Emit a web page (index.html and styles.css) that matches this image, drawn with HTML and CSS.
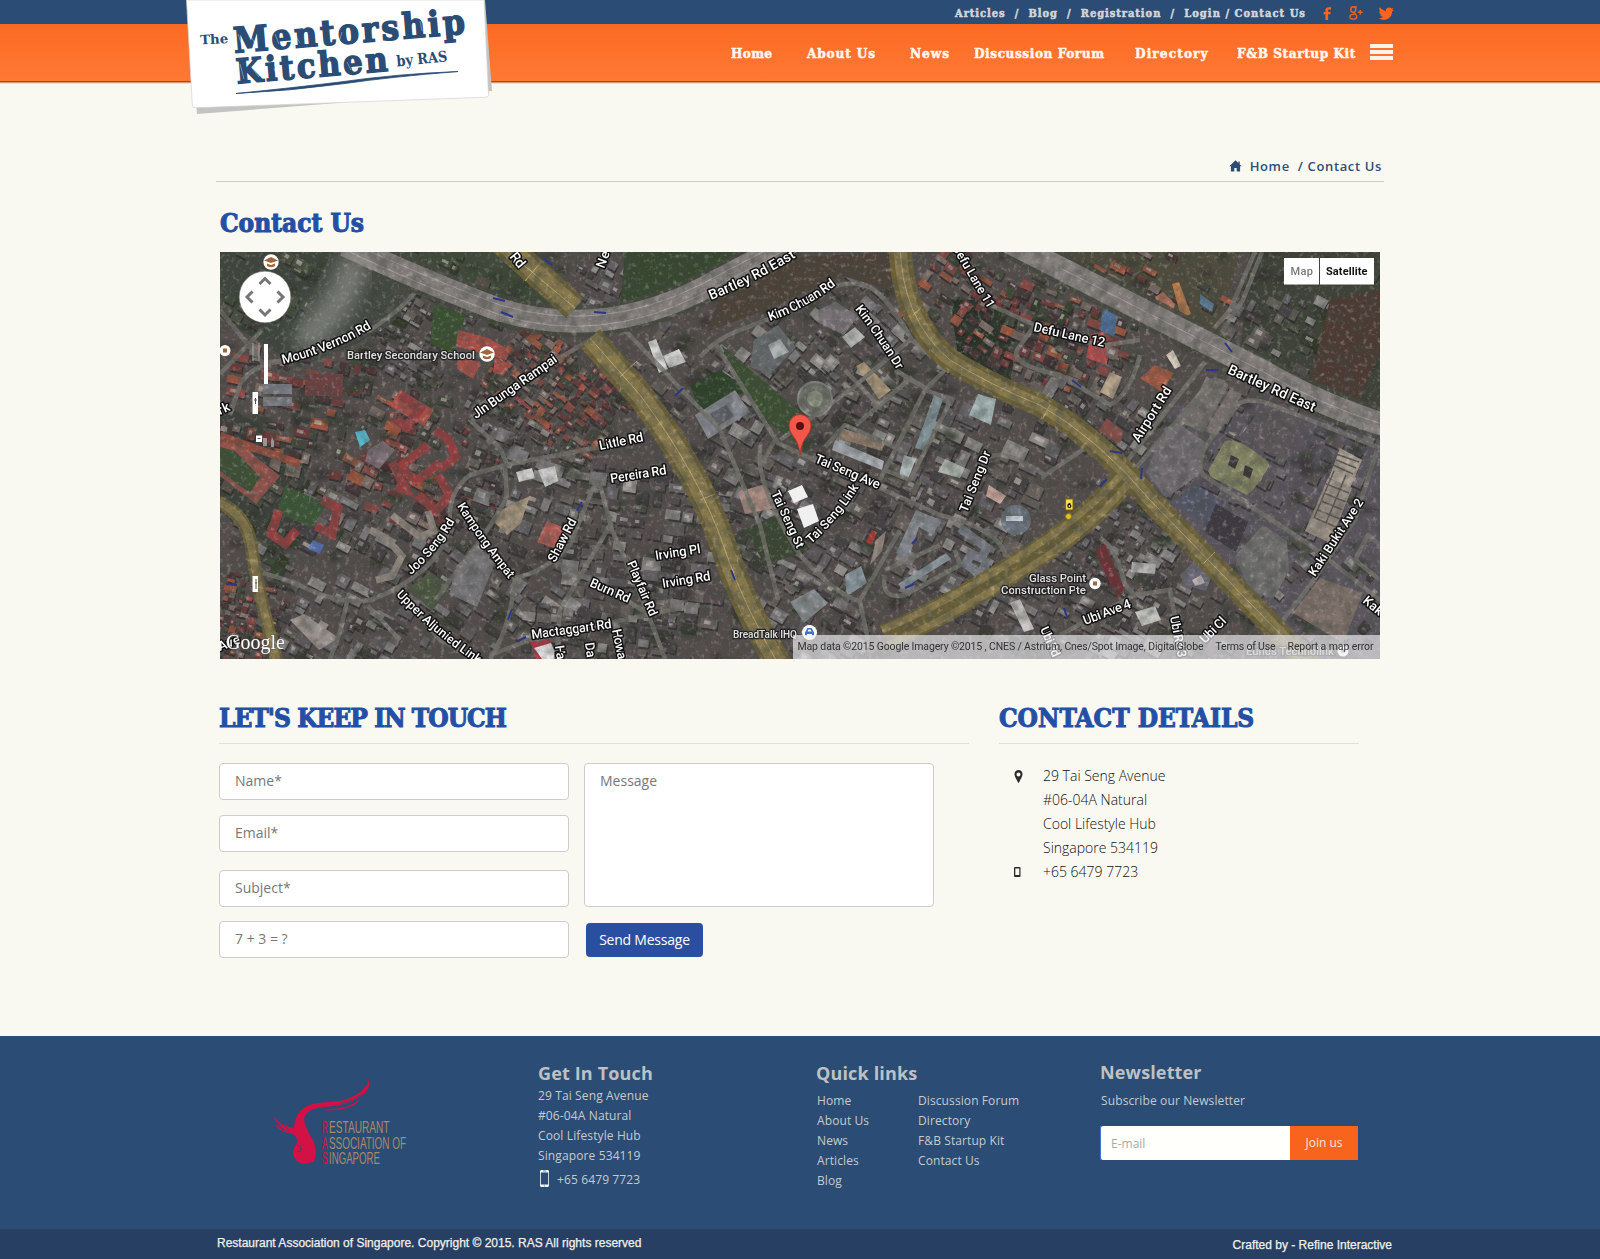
FILE: index.html
```html
<!DOCTYPE html>
<html lang="en">
<head>
<meta charset="utf-8">
<title>Contact Us - The Mentorship Kitchen by RAS</title>
<link rel="stylesheet" href="styles.css">
</head>
<body>
<header class="header">
  <div class="topbar">
    <nav class="toplinks">
      <a>Articles</a><i>/</i><a>Blog</a><i>/</i><a>Registration</a><i>/</i><a>Login / Contact Us</a>
    </nav>
    <div class="social">
      <svg width="9" height="13" viewBox="0 0 9 13"><path d="M2.4 13V7.2H.5V5h1.9V3.4C2.4 1.300 3.700.3 5.700.3H8v2.200H6.500C5.500 2.500 5.100 2.900 5.100 3.700V5h2.700L7.400 7.200H5.100V13z" fill="#f9651f"/></svg>
      <svg class="gplus" width="15" height="14" viewBox="0 0 15 14" fill="none" stroke="#e0622c" stroke-width="1.500"><ellipse cx="4.300" cy="3.500" rx="2.500" ry="2.700"/><path d="M4.500 1H8M5.500 6C3.500 7.500 7.800 7.700 7.800 10.500 7.800 14 .9 14 .9 10.700.9 8.600 3.500 8.200 5.200 8.300M11.300 4v4.600M9 6.300h4.600"/></svg>
      <svg width="16" height="13" viewBox="0 0 16 13"><path d="M15.800 3.300l-1.700 1.100C14 9.300 10.500 12.800 5.700 12.800 3.700 12.800 2 12.100.7 11c2 .1 3.300-.4 4.300-1.200-1.500-.2-2.400-.9-2.800-2.100h1.300C2 7.200 1.200 6 1.200 4.500l1.300.4C1.200 3.700.8 2 1.700.3l2.200 2L7.800 4.200C7.500 1.700 9.300.4 11 .5c1 0 1.700.4 2.300 1l2-.7-1.200 1.700z" fill="#f9651f"/></svg>
    </div>
  </div>
  <div class="mainbar">
    <nav class="mainnav">
      <a class="n1">Home</a><a class="n2">About Us</a><a class="n3">News</a><a class="n4">Discussion Forum</a><a class="n5">Directory</a><a class="n6">F&amp;B Startup Kit</a>
      <span class="burger"><b></b><b></b><b></b></span>
    </nav>
  </div>
  <svg class="logo" width="310" height="118" viewBox="185 0 310 118">
    <path d="M189 0H485L492 91 197 114z" fill="#c3c3c1"/>
    <path d="M186.500 0H484L488.500 95Q488.500 97 486 97.200L195 107.800Q192.500 107.800 192.300 105z" fill="#fff" stroke="#d2d2d2" stroke-width=".7"/>
    <g class="logotext">
      <text class="wide" transform="translate(200.500 44.500) rotate(-3)" font-size="13" textLength="28" lengthAdjust="spacingAndGlyphs">The</text>
      <g transform="translate(234.500 52.700) rotate(-4.700)"><text font-size="35" textLength="232" class="rough">Mentorship</text></g>
      <g transform="translate(237 83.500) rotate(-4.700)"><text font-size="34" textLength="152" class="rough">Kitchen</text></g>
      <text class="wide" transform="translate(397 66.500) rotate(-6)" font-size="15" textLength="51" lengthAdjust="spacingAndGlyphs">by RAS</text>
    </g>
    <path d="M236 93.500Q300 87 340 82 395 74 458 71.500 390 77 345 83.500 290 91 236 93.500z" fill="#2b4c74" stroke="#2b4c74" stroke-width=".8"/>
    <g stroke="#fff" stroke-width=".7" opacity=".55" fill="none"><path d="M238 34l5 14m6-15l8 14m18-13l4 10m15-11l6 10m18-10l4 10m20-11l-3 10m21-12l3 10m18-12l-7 9m21-24l4 22m21-14l2 10m16-12l3 15M240 64l4 15m8-11l7 9m15-9l3 9m13-12l3 10m14-8l4 7m17-22l3 20m16-10l4 8m14-9l3 8"/></g>
  </svg>
</header>

<main class="page">
  <div class="crumbs">
    <svg width="13" height="12" viewBox="0 0 13 12"><path d="M6.500.3L.3 6.300h1.600V11.600H5.300V8h2.400v3.600h3.400V6.300h1.600L10.700 4.400V1.500H9.300V3z" fill="#2b4c74"/></svg>
    <a>Home</a><span>/ Contact Us</span>
  </div>
  <h1>Contact Us</h1>

  <svg class="map" id="map" width="1160" height="407" viewBox="220 252 1160 407">
    <defs>
      <filter id="grain" x="0" y="0" width="100%" height="100%">
        <feTurbulence type="fractalNoise" baseFrequency=".09" numOctaves="5" seed="8"/>
        <feColorMatrix values="0 0 0 0 .05  0 0 0 0 .06  0 0 0 0 .05  1.900 1.200 0 0 -1.150"/>
      </filter>
      <filter id="light" x="0" y="0" width="100%" height="100%">
        <feTurbulence type="fractalNoise" baseFrequency=".22" numOctaves="3" seed="31"/>
        <feColorMatrix values="0 0 0 0 .8  0 0 0 0 .76  0 0 0 0 .74  2.200 1 0 0 -1.680"/>
      </filter>
      <filter id="mist" x="-30%" y="-30%" width="160%" height="160%"><feGaussianBlur stdDeviation="9"/></filter>
      <filter id="soft" x="-2%" y="-2%" width="104%" height="104%"><feGaussianBlur stdDeviation=".6"/></filter>
      <filter id="leaf" x="-5%" y="-5%" width="110%" height="110%"><feGaussianBlur stdDeviation="2.200"/></filter>
    </defs>
    <rect x="220" y="252" width="1160" height="407" fill="#554e4d"/>
    <g id="land">
      <path d="M220 252h150l60 40-70 50-60 25-80-50z" fill="#3f463d"/>
      <path d="M380 252h115l60 52-60-4-70-22z" fill="#404a3a"/>
      <path d="M220 400l90 60-30 110-60-60z" fill="#3e413b"/>
      <path d="M950 300h70l-10 90-50-20z" fill="#2a3328"/>
      <path d="M1040 252h200l-20 80-110-50z" fill="#504c3d"/>
      <path d="M1250 252h130v165l-100-30-40-30z" fill="#3f4338"/>
      <path d="M1170 410l50-20 160 45v224h-80l-160-190z" fill="#5d5760"/>
    </g>
    <g id="buildings" filter="url(#soft)"></g>
    <g id="trees" filter="url(#leaf)"></g>
    <g id="landmarks">
      <path d="M625 252H760l-60 38-50 20-30-5z" fill="#37482f"/>
      <path d="M1330 300l50-10v60l-20 50-50-20z" fill="#4d3b33"/>
      <path d="M745 530l40-20 25 40-45 15z" fill="#3a4632"/>
      <path d="M690 385l30-15 30 20-50 22z" fill="#2d4228"/>
      <path d="M330 255l60 10 30 25-30 35-60 30-35-25z" fill="#464b43" opacity=".8"/>
      <path d="M434 303l32 12-14 38-22-10z" fill="#39502f"/>
      <path d="M220 438l20 6 40 32-24 28-36-28z" fill="#94524b"/><path d="M220 447l15 4 25 26-10 16-30-22z" fill="#3e5134"/>
      <path d="M285 486l42 18-16 24-34-16z" fill="#3c5636"/>
      <path d="M721 345l95 80-18 20-40-30z" fill="#3b4f32"/>
      <path d="M780 258l115-6 8 42-60-18-80 35-55 20 15-45z" fill="#4d4238"/>
      <g fill="#aa4f48"><path d="M458 330l30 8 22 12-4 10-50-14zM459 355l22 8-8 16-16-10zM495 358l16 6-8 12-10-4zM400 390l34 20-10 16-34-20z"/></g>
      <g fill="none" stroke="#943f40" stroke-width="9"><path d="M435 430l14 10 7 17-16 12M392 462l14 28-10-4M428 445l-28 22 16 14 24-18M438 475l12 20-14 16-18-16M279 510l-8 24 14 10 12-14M322 500l16 8-6 26-16-8M400 395l20 14-14 18-10-8"/></g>
      <path d="M220 436l80 28" stroke="#934c3e" stroke-width="8"/>
      <path d="M305 374h38v22h-38z" fill="#6d4141"/><path d="M263 384h29v10h-29zm0 13h29v9h-29z" fill="#7c7e86"/>
      <path d="M355 432l10-2 5 10-10 7z" fill="#54c4dc"/><path d="M313 540l11 5-4 9-12-5z" fill="#5872bc"/>
      <path d="M368 450l15-9 12 9-16 19-14-8z" fill="#807078"/>
      <g fill="#d6d6d6"><path d="M648 342l8-3 12 30-9 4zM663 356l16-7 7 13-17 6zM516 472l16-4 3 10-16 4zM538 470l17-4 3 15-13 6z"/></g>
      <path d="M695 415l40-25 15 22-42 27z" fill="#85878f"/><path d="M710 414l16-9 8 11-16 10z" fill="#62636b"/>
      <path d="M754 340l24-15 18 22-26 28-20-8z" fill="#686b6e"/><path d="M768 345l12-6 9 13-15 7z" fill="#b0b4b4"/>
      <circle cx="815" cy="399" r="17" fill="#6c7068" stroke="#878b82" stroke-width="2"/><circle cx="815" cy="399" r="8" fill="#8a8d7f"/>
      <path d="M818 310l18-8 22 14-14 19-25-12z" fill="#797277"/><path d="M842 337l13-10 10 10-14 11z" fill="#b3b5b3"/>
      <path d="M856 366l8-4 27 28-12 9z" fill="#b19a7c"/>
      <path d="M842 428l43 14-3 9-44-13z" fill="#8d7969"/><path d="M835 440l49 21-2 9-50-20z" fill="#aaaeb5"/>
      <path d="M934 395l9 4-17 52-11-3z" fill="#7f8f95"/><path d="M904 455l12 4-8 20-9-3z" fill="#b0bbbb"/>
      <path d="M978 394l18 5-5 26-22-10z" fill="#a6b6b7"/><path d="M945 459l20 9-5 10-22-6z" fill="#aab2aa"/>
      <path d="M989 485l17 11-6 8-14-8z" fill="#d3aaa1"/>
      <circle cx="1016" cy="520" r="15" fill="#6c7480"/><path d="M1006 516h17v5h-17z" fill="#dce6ef"/>
      <path d="M898 584l48-31 5 6-49 30z" fill="#8b96a0"/><path d="M916 510l25 10-8 15-14-8-10 30-13-4z" fill="#85888e"/><path d="M960 528l27 20-6 10-10-4-5 10 14 10 8-14" fill="none" stroke="#777a82" stroke-width="9"/>
      <path d="M497 512l20-10 13-6-9 27-14 12-12-12z" fill="#a3927b"/><path d="M547 521l23 9-13 19-20-7z" fill="#b85d55"/>
      <path d="M457 565l20-16 18 14-18 44-28-13z" fill="#787679"/>
      <path d="M408 588l22-16 21 15-19 24z" fill="#4c5841"/>
      <path d="M370 530l16 8 16 18-10 20-16 4M392 515l28 22 14-6-6-20" fill="none" stroke="#8f867e" stroke-width="7"/>
      <path d="M290 620l14-6 35 24-20 12z" fill="#9c938f"/><path d="M530 642l20-2 8 19h-22z" fill="#ad3544"/><path d="M534 648l17-5 7 16h-16z" fill="#eee"/>
      <path d="M1155 297l8-5 12 12-4 16-10-6z" fill="#af6f5a"/><path d="M1172 284l7-2 12 32-10 3z" fill="#ba794b"/><path d="M1200 294l14 10-2 8-12-8z" fill="#587893"/>
      <path d="M1103 308l14 8-3 21-14-7z" fill="#4d6c96"/><path d="M1173 350l8 16-6 3-9-14z" fill="#dcd1c2"/><path d="M1155 365l19 8-12 19-22-14z" fill="#aa5b45"/>
      <path d="M1091 334l12-2 4 33-21-7z" fill="#b14b4d"/><path d="M1110 372l12 5-9 22-13-7z" fill="#b8a48a"/><path d="M1107 418l16 13-3 13-22-13z" fill="#8c4e49"/>
      <path d="M1206 377l20 6-23 47-19-8z" fill="#77706f"/><path d="M1230 389l12 5-26 42-11-5z" fill="#7c7272"/>
      <path d="M1165 428l12-6 28 20-5 32-34 24-20-26z" fill="#736d72"/><path d="M1193 482l30 20-12 26-36-24z" fill="#545768"/><path d="M1216 504l32 18-12 30-32-20z" fill="#3e3841"/>
      <path d="M1256 415l28-12 20 20-20 37-46-20z" fill="#5d565a"/>
      <path d="M1225 441q14-4 42 20 4 3 0 9l-14 20-6 5-36-18-3-6z" fill="#858764"/><path d="M1231 455l8 4-4 10-7-4zm14 10l8 4-3 10-7-4z" fill="#3c3438"/>
      <path d="M1263 525l24 16 2 30-16 28-24-10-14-33z" fill="#727170"/><path d="M1303 540l14 10-20 10z" fill="#4e5048"/>
      <path d="M1340 448l22 12-12 28-21-10z" fill="#b0a498"/><path d="M1328 478l24 10-22 55-25-12z" fill="#9a8f86"/><path d="M1336 454l23 8m-25-3l22 9m-25-4l22 10M1326 484l23 9m-25 0l22 9m-25-1l22 9m-25 0l22 9m-25-1l21 9m10-52l-20 48m8-52l-20 47" stroke="#5e5652" stroke-width="1.500"/>
      <path d="M1095 550l10-6 20 47-8 8z" fill="#713035"/><path d="M1132 562l24 2-1 10-24-2z" fill="#b8b7b7"/><path d="M1180 575l14-14 20 10-8 20-22-6z" fill="#6a6776"/><path d="M1192 580l9-5 4 8-10 3z" fill="#bcb1b2"/>
      <path d="M1010 603l10-4 14 30-10 3z" fill="#ccc6c5"/><path d="M1135 612l20-6 6 14-19 6z" fill="#c5c5c0"/>
      <path d="M876 540l10-9-4 20-12 14z" fill="#9e8e86"/><path d="M872 530l5 2-5 13-6-3z" fill="#a13a34"/>
      <path d="M1320 578l43 15-20 50-50-30z" fill="#80716a"/>
      <path d="M790 602l24-13 14 14-24 20z" fill="#878c90"/><path d="M845 575l16-9 6 17-20 13z" fill="#8c9aa4"/><path d="M738 492l27-8 10 24-30 6z" fill="#a78980"/>
    </g>

    <g class="road minor">
      <path d="M425 280Q405 308 370 330L285 360Q250 365 240 385L230 415M220 310L262 362 280 362M220 374L262 330"/>
      <path d="M262 573Q290 580 310 590 345 605 370 600 400 590 425 568 450 545 450 515 450 490 470 475L510 464 600 447Q640 440 655 420M507 464L500 448 472 422 480 405 590 340"/>
      <path d="M505 468L507 497Q490 530 450 580L436 600M515 578L512 600Q508 630 490 659M515 578Q545 572 570 545L592 490 600 480M555 562L610 590 650 615M600 485L612 530Q640 590 665 659"/>
      <path d="M612 522L560 610 556 659M490 655L530 640 660 612 700 605M395 586L440 640 480 659M347 602L340 632 330 659M368 606L400 640"/>
      <path d="M620 325L720 430 760 525 778 600M590 340L655 425M760 445L760 465Q765 500 800 555 830 590 860 602L868 640"/>
      <path d="M700 357Q715 340 735 332L800 307Q835 275 870 287 890 300 912 340L932 357"/>
      <path d="M716 345L778 443 810 458 875 486 940 515Q1000 530 1005 555L1022 562M775 440L762 463M780 440L850 390 910 340"/>
      <path d="M825 447L845 425 905 452M880 480L925 390 945 370M925 390L945 397Q950 400 948 406L910 480 885 470M895 370L925 388M856 425L912 377M845 370L878 405"/>
      <path d="M990 305L1035 325 1017 350Q1010 365 1060 375L1040 400M1035 325L1100 346 1140 340M1060 375L1110 405Q1130 395 1140 355"/>
      <path d="M965 515L985 460Q1000 445 1045 475L1090 445"/>
      <path d="M1120 470L1205 362M1130 475L1210 382M1200 345L1230 310 1255 252M1210 350L1243 300 1262 252"/>
      <path d="M1180 425L1206 385Q1215 375 1226 385L1202 430 1180 420M1210 440L1237 405Q1245 398 1265 402L1380 448M1210 440Q1195 460 1203 475L1310 545 1380 600M1377 450L1355 520 1310 585 1283 620"/>
      <path d="M1100 538Q1115 545 1125 585L1135 595 1170 590Q1175 620 1185 659M1135 595L1060 635M1380 545L1368 535 1355 560 1380 580"/>
      <path d="M885 575Q880 600 905 595L960 565 955 550M885 570L940 545M860 600L900 530"/>
    </g>
    <g class="road verge"><path d="M345 245Q420 280 500 310 600 340 700 290L795 240M1005 240L1060 268 1150 314 1260 370Q1320 405 1385 425"/></g>
    <g class="road major"><path d="M345 245Q420 280 500 310 600 340 700 290L795 240M1005 240L1060 268 1150 314 1260 370Q1320 405 1385 425"/></g>
    <g class="lane"><path d="M345 240Q420 275 500 305 600 335 700 285L795 235M345 250Q420 285 500 315 600 345 700 295L795 245M1060 268L1150 314 1260 370Q1320 405 1385 425"/></g>
    <g class="road highway">
      <path d="M500 240L575 308M590 338L640 395Q700 475 725 550 745 610 785 675" stroke-width="27"/>
      <path d="M900 245Q902 320 950 360 990 385 1040 405 1100 440 1150 500L1320 675" stroke-width="23"/>
      <path d="M1125 478Q1090 520 1040 552 950 610 885 638" stroke-width="27"/>
      <path d="M218 502Q248 515 252 550 260 600 278 665" stroke-width="13"/>
    </g>
    <g class="road pavement">
      <path d="M500 240L575 308M590 338L640 395Q700 475 725 550 745 610 785 675" stroke-width="18"/>
      <path d="M900 245Q902 320 950 360 990 385 1040 405 1100 440 1150 500L1320 675" stroke-width="13"/>
      <path d="M1122 474Q1086 514 1037 545 950 602 882 630M1128 484Q1094 526 1043 559 955 616 888 645" stroke-width="7"/>
      <path d="M218 502Q248 515 252 550 260 600 278 665" stroke-width="8"/>
    </g>
    <g class="lane yellow"><path d="M500 245L575 308M590 338L640 395Q700 475 725 550 745 610 785 675M900 245Q902 320 950 360 990 385 1040 405 1100 440 1150 500L1320 675M525 281L541 262M620 377L637 361M700 500L715 494M913 315L921 308M1204 563L1215 552M1043 418L1050 405"/></g>
    <rect x="220" y="252" width="1160" height="407" filter="url(#light)" opacity=".38"/>
    <rect x="220" y="252" width="1160" height="407" filter="url(#grain)" opacity=".42"/>
    <path d="M788 491l14-6 6 12-14 6zM797 509l16-5 6 17-15 7z" fill="#f0f0f0"/>
    <path d="M355 258Q350 300 300 345" fill="none" stroke="#c5c5c5" stroke-width="28" opacity=".4" filter="url(#mist)"/>
    <g class="oneway"><path d="M493 298l12 3M501 312l12 5M543 258l9 7M594 312l12 1M675 396l8-8M735 580l-4-10M577 511l5-9M508 620l4-11M226 584l11 1M518 641l8-4M912 544l5-6M905 588l9-4M1225 343l7 9M1206 370l12 0M1072 380l9 7M1110 451l12 2M1142 468l-1 11M1100 487l7-8M1067 617l-3-9"/></g>

    <g id="labels"></g>

    <g class="poi">
      <text x="347" y="358.500" textLength="128">Bartley Secondary School</text>
      <text x="1029" y="581.500" textLength="57">Glass Point</text>
      <text x="1001" y="593.500" textLength="85">Construction Pte</text>
      <text class="narrow" x="733" y="637.500" textLength="64" lengthAdjust="spacingAndGlyphs">BreadTalk IHQ</text>
      <text x="1246" y="655" textLength="88" opacity=".7">Eunos Technolink</text>
      <g fill="#fff"><circle cx="487" cy="354" r="7.700"/><circle cx="271" cy="262" r="7.700"/><circle cx="225" cy="350.500" r="5.500"/><circle cx="1095" cy="583.500" r="5.700"/><circle cx="809.500" cy="632.500" r="7.500"/><circle cx="1343" cy="651" r="5.500"/></g>
      <g fill="#a0663c"><path d="M480 352.500l7-3.500 7 3.500-7 2.500zM483 355.500l4 1.500 4-1.500v2.500q-4 2.500-8 0zM264 260.500l7-3.500 7 3.500-7 2.500zM267 263.500l4 1.500 4-1.500v2.500q-4 2.500-8 0z"/><path d="M223 348.500h4v4h-4zM1093 581.500h4v4h-4zM1341.500 649.500h3v3h-3z"/></g>
      <path d="M805 635.500v-3l2.500-4.500h4l2.500 4.500v3h-2v-1.500h-5v1.500zM807.500 631.500h4l-1-2h-2z" fill="#3f72c6"/>
    </g>
    <circle cx="265" cy="297" r="25.800" fill="#fff" stroke="#777" stroke-opacity=".5"/>
    <path d="M259.500 284l5.500-5.500 5.500 5.500M259.500 309.500l5.500 5.500 5.500-5.500M252.500 291.500l-5.500 5.500 5.500 5.500M277.500 291.500l5.500 5.500-5.500 5.500" fill="none" stroke="#757575" stroke-width="3"/>
    <path d="M264 344h4v40h-4zM252.500 392h5.500v22h-5.500zM256 435.500h6v6.500h-6zM252.500 576h5.500v16h-5.500z" fill="#fff"/>
    <path d="M254 400h3m-1.500-2v6M257.500 438.500h3M255 583h2m-1-4v10" stroke="#555"/>
    <path d="M263 438h4v8h-4zM272 437l2 4v6h-3v-6z" fill="#aaa" opacity=".8"/>
    <path d="M253 343v18M259 343v18" stroke="#bbb" stroke-width="2" opacity=".35"/>
    <path d="M800 455Q799 443 793 436 789 431 789 425.500a11 11 0 0 1 22 0Q811 431 807 436 801 443 800 455z" fill="#f5564a" stroke="#a83228" stroke-width=".8"/><circle cx="800" cy="426" r="4" fill="#551111"/>
    <path d="M1065.500 499h7.500v11h-7.500z" fill="#f6de4a" stroke="#7a6500"/><text x="1069.300" y="508" font-size="8" text-anchor="middle" font-weight="700" font-family="Roboto,sans-serif">6</text><circle cx="1068.500" cy="516.500" r="3" fill="#ddc02c" stroke="#8c7300"/>
    <text class="google" x="226" y="649" textLength="59">Google</text>
    <path d="M793 635h587v24H793z" fill="#eeeef2" opacity=".66"/>
    <g class="credits"><text x="797.500" y="650" textLength="406">Map data ©2015 Google Imagery ©2015 , CNES / Astrium, Cnes/Spot Image, DigitalGlobe</text><text x="1215.500" y="650" textLength="60">Terms of Use</text><text x="1287.500" y="650" textLength="86">Report a map error</text></g>
    <path d="M1284 258h35v26.500h-35zM1320 258h54v26.500h-54z" fill="#fff"/>
    <g class="types"><text x="1290.500" y="275" textLength="22.500" fill="#777">Map</text><text x="1326" y="275" textLength="41.500" fill="#111" font-weight="700">Satellite</text></g>
  </svg>

  <div class="columns">
    <section class="touch">
      <h2>LET'S KEEP IN TOUCH</h2>
      <form class="form">
        <div class="fields">
          <input placeholder="Name*"><input placeholder="Email*"><input class="subject" placeholder="Subject*"><input class="sum" placeholder="7 + 3 = ?">
        </div>
        <div class="message">
          <textarea placeholder="Message"></textarea>
          <button type="button">Send Message</button>
        </div>
      </form>
    </section>
    <section class="details">
      <h2>CONTACT DETAILS</h2>
      <div class="row"><svg width="9" height="13" viewBox="0 0 9 13"><path fill-rule="evenodd" d="M4.500 0A4 4 0 0 0 .5 4.300C.5 6 1.700 8 2.500 9.500L4 12.500q.5.700 1 0L6.500 9.500C7.300 8 8.500 6 8.500 4.300A4 4 0 0 0 4.500 0zm0 2.400a2 2 0 1 1 0 4 2 2 0 0 1 0-4z" fill="#2b2b2b"/></svg><p>29 Tai Seng Avenue<br>#06-04A Natural<br>Cool Lifestyle Hub<br>Singapore 534119</p></div>
      <div class="row"><svg class="cell" width="7" height="10" viewBox="0 0 7 10"><path fill-rule="evenodd" d="M1 0h4.500q1 0 1 1v8q0 1-1 1H1Q0 10 0 9V1Q0 0 1 0zm.3 1.500v6.500h4V1.500z" fill="#2b2b2b"/></svg><p>+65 6479 7723</p></div>
    </section>
  </div>
</main>

<footer class="footer">
  <div class="fcols">
    <svg class="ras" width="136" height="90" viewBox="272 1076 136 90">
      <path d="M366 1077Q371 1082 368 1089 358 1104 325 1107 305 1108 304 1120 306 1130 313 1140 318 1152 314 1161 309 1164 304 1164 294 1162 293 1153 293 1148 297 1143 299 1137 290 1132 279 1129 273 1116 281 1126 294 1128 295 1106 318 1103L340 1101Q358 1097 367 1085 369 1080 366 1077z" fill="#d41144"/>
      <path d="M325 1110Q349 1110 358 1101M276 1125Q282 1132 294 1134" stroke="#d41144" fill="none" stroke-width="1.200"/>
      <path d="M340 1103.500Q358 1100 367 1089M276 1122l14 8" stroke="#2b4c74" fill="none" stroke-width=".8"/>
      <path d="M297 1145q4 0 4 4t-4 2" stroke="#2b4c74" fill="none"/>
      <g class="rastext">
        <text class="cap" x="322" y="1132.500" textLength="5.500" lengthAdjust="spacingAndGlyphs">R</text><text x="329" y="1132.500" textLength="60.500" lengthAdjust="spacingAndGlyphs">ESTAURANT</text>
        <text class="cap" x="322" y="1148.500" textLength="5.500" lengthAdjust="spacingAndGlyphs">A</text><text x="329" y="1148.500" textLength="77" lengthAdjust="spacingAndGlyphs">SSOCIATION OF</text>
        <text class="cap" x="322" y="1164.300" textLength="5.500" lengthAdjust="spacingAndGlyphs">S</text><text x="329" y="1164.300" textLength="51" lengthAdjust="spacingAndGlyphs">INGAPORE</text>
      </g>
    </svg>
    <div class="git">
      <h3>Get In Touch</h3>
      <p>29 Tai Seng Avenue<br>#06-04A Natural<br>Cool Lifestyle Hub<br>Singapore 534119</p>
      <div class="phone"><svg width="9" height="17" viewBox="0 0 9 17"><path d="M.5 1.500v14M8.500 1.500v14" stroke="#cdd3dc"/><path d="M1 0h7l1 1v1.500H0V1zM0 14.500h9V16L8 17H1L0 16z" fill="#f4f5f7"/><path d="M3 1h3M4 16h1" stroke="#2b4c74" stroke-width=".7"/></svg><span>+65 6479 7723</span></div>
    </div>
    <div class="quick">
      <h3>Quick links</h3>
      <div class="lists"><p>Home<br>About Us<br>News<br>Articles<br>Blog</p><p>Discussion Forum<br>Directory<br>F&amp;B Startup Kit<br>Contact Us</p></div>
    </div>
    <div class="news">
      <h3>Newsletter</h3>
      <p>Subscribe our Newsletter</p>
      <div class="join"><input placeholder="E-mail"><button type="button">Join us</button></div>
    </div>
  </div>
  <div class="legal"><span>Restaurant Association of Singapore. Copyright © 2015. RAS All rights reserved</span><span class="by">Crafted by - Refine Interactive</span></div>
</footer>
<script src="map.js"></script>
</body>
</html>
```
FILE: styles.css
```css
*{box-sizing:border-box}
body{margin:0;background:#faf9f1;font-family:"Open Sans",sans-serif;color:#333;width:1600px}
h1,h2,h3,p{margin:0}
.header{position:relative;height:84px}
.topbar{height:24px;background:#2b4c74;display:flex;justify-content:flex-end;padding-right:206px;align-items:center}
.toplinks{display:flex;justify-content:space-between;align-items:center;width:351px;margin-right:17px;margin-left:-1px;height:24px;padding-top:3px;font:700 11px/16px "DejaVu Serif",serif;font-stretch:condensed;color:#d3d5da;letter-spacing:.95px;white-space:nowrap;-webkit-text-stroke:.5px #d3d5da}
.toplinks a:last-child{letter-spacing:1.05px}
.toplinks i{font-style:normal}
.social{display:flex;align-items:center;gap:0;width:71px;justify-content:space-between;padding-top:2px}
.gplus{margin-left:3px}
.mainbar{height:60px;background:linear-gradient(#fb6a22,#ff7935 57px,#b9450d 57px,#b9450d 58px,#cf9a72 58px,#cf9a72 59px,#efe3d2 59px)}
.mainnav{display:flex;padding:17px 0 0 731px;font:700 13.500px/24px "DejaVu Serif",serif;font-stretch:condensed;color:#fff6ee;white-space:nowrap;letter-spacing:.55px;-webkit-text-stroke:.5px #fff6ee}
.n1{width:76px;letter-spacing:.3px}.n2{width:103px;letter-spacing:.85px}.n3{width:64px;letter-spacing:1px}.n4{width:161px}.n5{width:102px;letter-spacing:1.1px}.n6{width:133px}
.burger{display:flex;flex-direction:column;gap:2px;padding-top:3px}
.burger b{width:23px;height:4px;background:#fff3ea}
.logo{position:absolute;left:185px;top:0}
.logotext{font-family:"DejaVu Serif",serif;font-weight:700;font-stretch:condensed;fill:#2b4c74}
.wide{font-stretch:normal}
.rough{stroke:#2b4c74;stroke-width:1.400}
.page{width:1168px;margin-left:216px;height:952px}
.crumbs{height:98px;border-bottom:1px solid #ccc;display:flex;justify-content:flex-end;align-items:center;padding:67px 2px 0 0;font-weight:600;font-size:13px;line-height:18px;letter-spacing:.64px;color:#2f4f77}
.crumbs a{margin:0 8px 0 8px}
h1,h2{font-family:"DejaVu Serif",serif;font-weight:700;font-stretch:condensed;color:#2350a5;white-space:nowrap;-webkit-text-stroke:1px #2350a5}
h1{font-size:26px;line-height:30px;padding:26px 0 14px 4px;height:70px}
.map{display:block;margin-left:4px}
.road{fill:none;stroke-linejoin:round}
.minor{stroke:#77746f;stroke-width:4.500;stroke-opacity:.85}
.verge{stroke:#46493f;stroke-width:32;stroke-opacity:.8}
.major{stroke:#86807e;stroke-width:23}
.highway{stroke:#6f6337;stroke-opacity:.92}
.pavement{stroke:#8d7e50;stroke-opacity:.85}
.lane{fill:none;stroke:#b5b0ad;stroke-width:1;opacity:.7}
.yellow{stroke:#cfc08a}
.oneway{stroke:#2a3688;stroke-width:2}
#labels text{font-family:Roboto,sans-serif;font-weight:500;fill:#fff;stroke:#111;stroke-width:3px;paint-order:stroke;stroke-linejoin:round}
.poi text{font-family:Roboto,sans-serif;font-size:11.500px;font-weight:500;fill:#e2e2e2;stroke:#222;stroke-width:2.500px;paint-order:stroke}
.google{font:20px "Liberation Serif",serif;fill:#fff;stroke:#555;stroke-width:1px;paint-order:stroke}
.credits{font:10.500px Roboto,sans-serif;fill:#333}
.types{font:11px Roboto,sans-serif}
.types text:first-child{font-weight:500}
.columns{display:flex;gap:30px;padding:43px 0 0 3px}
h2{font-size:26px;line-height:32px;height:42px;border-bottom:1px solid #dfdfdb}
.touch{width:750px}.details{width:360px}
.touch h2{letter-spacing:-.95px}
.form{display:flex;gap:15px;padding-top:19px}
.fields{width:350px;display:flex;flex-direction:column}
input,textarea,button{font-family:"Open Sans",sans-serif;border-radius:4px;display:block;margin:0;outline:0;resize:none}
.form input,.form textarea{width:350px;height:37px;border:1px solid #ccc;background:#fff;font-size:14px;padding:0 15px 2px;margin-bottom:15px}
.form .fields .subject{margin:3px 0 14px}
.form textarea{height:144px;padding:7px 15px;margin:0 0 16px}
::placeholder{color:#777;opacity:1}
.message button{margin-left:2px;width:117px;height:34px;background:#2b4fa0;border:0;color:#fff;font-size:14px;letter-spacing:-.22px;padding:0 0 2px}
.row{display:flex;padding-left:15px}
.row p{font-weight:300;font-size:14px;line-height:24px;color:#111;padding-left:1px}
.row svg{width:9px;margin:6px 19px 0 0}
.row .cell{margin-top:7px;width:7px;margin-right:21px}
.details h2{margin-bottom:20px}
.footer{background:#2b4c74;height:223px;color:#c8cacc;font-size:12px;line-height:20px;border-top:0}
.fcols{display:flex;height:193px;padding-left:272px}
h3{font-size:18px;line-height:24px;font-weight:700;color:#bfc0c2;letter-spacing:.15px}
.ras{margin:40px 130px 0 0}
.rastext{font:16.500px "Liberation Sans Narrow","Liberation Sans",sans-serif;fill:#a88a66}
.cap{fill:#d41144;stroke:#d41144;stroke-width:.4px}
.narrow{letter-spacing:0}
.git{width:278px;padding-top:25px;letter-spacing:.12px}
.git p{padding-top:1px}
.phone{display:flex;align-items:center;gap:8px;padding:3px 0 0 2px;height:24px}
.phone svg{margin-top:-3px}
.quick{width:284px;padding-top:25px;letter-spacing:.1px}
.lists{display:flex;padding:6px 0 0 1px}
.lists p:first-child{width:101px}
.news{width:258px;padding-top:24px;letter-spacing:.12px}
.news p{padding:7px 0 0 1px}
.join{display:flex;margin-top:15px;height:34px;border-left:1px solid #3c79c9}
.join input{width:189px;height:34px;border:0;border-radius:2px 0 0 2px;background:#fffffc;font-size:12px;padding:1px 10px 0}
.join input::placeholder{color:#aaa}
.join button{width:68px;border:0;border-radius:0;background:#f8641c;color:#fbe5da;font-size:12px;padding:0 0 1px}
.legal{height:30px;background:#263f63;display:flex;justify-content:space-between;padding:4px 208px 0 217px;font:12px/20px "Liberation Sans",sans-serif;color:#f1f1ea;-webkit-text-stroke:.25px #f1f1ea}
.by{padding-top:2px}
```
FILE: map.js
```js
const NS = 'http://www.w3.org/2000/svg';
let seed = 4217;
const rnd = () => ((seed = (seed * 16807) % 2147483647) / 2147483647);
const add = (parent, name, attrs) => {
  const el = document.createElementNS(NS, name);
  for (const k in attrs) el.setAttribute(k, attrs[k]);
  return parent.appendChild(el);
};

const GREY = ['#69656a', '#7e7a7b', '#5d595a', '#474344', '#8f8b89', '#564d4f', '#3f3b3a', '#67605c'];
const RED = ['#8a4a44', '#a0563f', '#6e3b3a', '#4a3638', '#44463c', '#7d6c66'];
const GREEN = ['#36422f', '#414b39', '#303826', '#4c503f', '#564f46'];
const MAUVE = ['#635d65', '#6f686e', '#555058', '#5d5657'];

// centre x, centre y, width, height, angle, cell, fill ratio, palette
const districts = [
  [310, 300, 180, 110, 30, 14, .3, GREEN], [420, 330, 80, 100, 30, 9, .7, GREY],
  [330, 420, 220, 120, 12, 15, .5, RED], [260, 500, 110, 90, 30, 14, .4, GREEN],
  [420, 470, 150, 120, 28, 14, .45, RED], [245, 620, 60, 90, 15, 8, .8, RED],
  [350, 550, 170, 90, 28, 17, .45, GREY], [340, 630, 160, 70, 28, 14, .65, GREY],
  [555, 390, 130, 90, 38, 9, .9, RED], [500, 430, 90, 50, 30, 9, .6, GREY],
  [450, 275, 120, 50, 25, 14, .3, GREEN], [600, 285, 60, 60, 30, 13, .7, GREY],
  [540, 500, 160, 110, 20, 16, .6, GREY], [640, 540, 150, 150, 8, 16, .7, GREY],
  [500, 600, 170, 90, 35, 17, .65, GREY], [600, 640, 160, 60, 8, 13, .8, GREY],
  [675, 370, 80, 90, 40, 15, .5, GREY], [770, 370, 110, 110, 38, 16, .45, GREY],
  [850, 350, 110, 130, 42, 14, .75, GREY], [730, 450, 90, 80, 30, 17, .6, GREY],
  [760, 520, 70, 100, 22, 16, .6, GREY], [820, 530, 120, 110, 30, 15, .75, GREY],
  [810, 620, 110, 70, 30, 16, .6, GREY], [890, 440, 130, 110, 25, 15, .6, GREY],
  [980, 450, 150, 140, 25, 19, .65, GREY], [930, 540, 120, 110, 28, 18, .5, GREY],
  [960, 300, 90, 90, 35, 12, .7, RED], [1060, 340, 120, 90, 22, 13, .85, RED],
  [1030, 295, 80, 50, 25, 15, .3, GREEN], [1090, 410, 130, 70, 35, 13, .75, GREY],
  [1120, 540, 100, 90, 30, 9, .6, GREY], [1050, 620, 180, 80, 28, 15, .7, GREY],
  [1180, 600, 110, 100, 30, 15, .5, GREY], [1280, 320, 100, 80, 28, 14, .45, GREY],
  [1340, 310, 80, 110, 28, 16, .25, GREEN], [1280, 460, 160, 140, 25, 16, .4, MAUVE],
  [1320, 600, 120, 110, 40, 13, .5, GREY], [1215, 450, 90, 110, 28, 17, .3, MAUVE],
  [1160, 280, 130, 60, 28, 14, .3, RED]
];
const buildings = document.getElementById('buildings');
for (const [cx, cy, w, h, angle, cell, fill, palette] of districts) {
  const g = add(buildings, 'g', { transform: `translate(${cx} ${cy}) rotate(${angle})` });
  for (let x = -w / 2; x < w / 2; x += cell) {
    for (let y = -h / 2; y < h / 2; y += cell * .8) {
      if (rnd() > fill) continue;
      const bw = cell * (.4 + rnd() * .9), bh = cell * (.3 + rnd() * .6);
      const bx = x + rnd() * 3, by = y + rnd() * 3;
      add(g, 'rect', { x: bx + 1.5, y: by + 2, width: bw, height: bh, fill: '#2a2628', opacity: .7 });
      add(g, 'rect', { x: bx, y: by, width: bw, height: bh, fill: palette[Math.floor(rnd() * palette.length)] });
      if (rnd() > .7) add(g, 'rect', { x: bx + bw * .2, y: by + bh * .2, width: bw * .4, height: bh * .4, fill: '#b8b3ae', opacity: .7 });
    }
  }
}

const trees = document.getElementById('trees');
for (let i = 0; i < 420; i++) {
  add(trees, 'ellipse', {
    cx: 220 + rnd() * 1160, cy: 252 + rnd() * 407, rx: 3 + rnd() * 10, ry: 2 + rnd() * 5,
    fill: ['#2b3326', '#333c2c', '#2e2a2c'][i % 3], opacity: .65
  });
}

// text, start x/y, end x/y, bend, font size (bend pushes the middle of the baseline downwards)
const labels = [
  ['Mount Vernon Rd', 283, 364, 372, 328, 7, 13], ['Jln Bunga Rampai', 476, 419, 558, 361, 0, 13],
  ['Little Rd', 600, 450, 644, 441, 0, 13], ['Pereira Rd', 611, 483, 667, 474, 0, 13],
  ['Irving Pl', 656, 560, 701, 553, 0, 13], ['Irving Rd', 663, 588, 711, 580, 0, 13],
  ['Kampong Ampat', 457, 506, 509, 579, 3, 12.5], ['Joo Seng Rd', 411, 575, 455, 521, 6, 12.5],
  ['Shaw Rd', 555, 563, 577, 521, 0, 13], ['Burn Rd', 589, 586, 628, 603, 0, 13],
  ['Playfair Rd', 627, 563, 650, 617, 0, 12.5], ['Mactaggart Rd', 532, 639, 612, 628, 0, 13],
  ['Upper Aljunied Link', 396, 595, 478, 664, 6, 12.5], ['Ha', 555, 646, 557, 660, 0, 13],
  ['Da', 585, 643, 587, 658, 0, 13], ['Howa', 612, 630, 618, 660, 0, 13],
  ['Rd', 509, 257, 519, 269, 0, 14], ['Ne', 604, 269, 610, 253, 0, 13],
  ['rk', 220, 415, 231, 410, 0, 13], ['Ave', 220, 651, 241, 643, 0, 13],
  ['Bartley Rd East', 711, 300, 796, 257, 4, 14], ['Kim Chuan Rd', 770, 321, 836, 285, 6, 13],
  ['Kim Chuan Dr', 855, 309, 897, 370, -2, 12.5], ['Defu Lane 11', 952, 248, 988, 309, 0, 12.5],
  ['Defu Lane 12', 1033, 331, 1104, 347, 0, 13], ['Bartley Rd East', 1227, 373, 1313, 412, 0, 14],
  ['Airport Rd', 1139, 443, 1172, 390, 0, 13.5], ['Tai Seng Ave', 814, 462, 878, 489, 0, 13],
  ['Tai Seng St', 771, 493, 797, 549, 0, 12.5], ['Tai Seng Link', 811, 544, 859, 487, 5, 12.5],
  ['Tai Seng Dr', 967, 513, 991, 453, 0, 12.5], ['Kaki Bukit Ave 2', 1315, 577, 1364, 502, 0, 12.5],
  ['Kak', 1362, 602, 1379, 616, 0, 13], ['Ubi Ave 4', 1085, 625, 1132, 607, 0, 13],
  ['Ubi Cl', 1205, 644, 1227, 622, 0, 13], ['Ubi Rd 3', 1170, 617, 1178, 658, 0, 12.5],
  ['Ubi Rd', 1040, 629, 1053, 658, 0, 12.5]
];
const labelLayer = document.getElementById('labels');
labels.forEach(([text, x1, y1, x2, y2, bend, size], i) => {
  const id = 'street' + i;
  const len = Math.hypot(x2 - x1, y2 - y1);
  const qx = (x1 + x2) / 2 - (y2 - y1) / len * bend, qy = (y1 + y2) / 2 + (x2 - x1) / len * bend;
  const tx = x2 + (x2 - qx) * .2, ty = y2 + (y2 - qy) * .2;
  add(labelLayer, 'path', { id, fill: 'none', d: `M${x1} ${y1}Q${qx} ${qy} ${x2} ${y2}L${tx} ${ty}` });
  const t = add(labelLayer, 'text', { 'font-size': size });
  const tp = add(t, 'textPath', { href: '#' + id, textLength: len, lengthAdjust: 'spacing' });
  tp.textContent = text;
});
```
